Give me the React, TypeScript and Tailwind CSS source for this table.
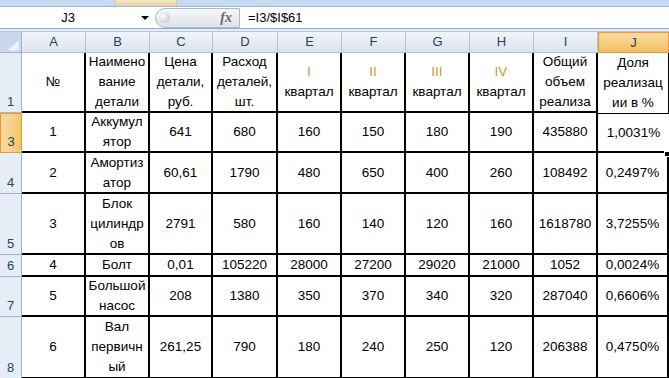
import React from "react";

type Cell = string[];

const cols = ["A", "B", "C", "D", "E", "F", "G", "H", "I", "J"];

const rows: { n: string; cells: Cell[] }[] = [
  {
    n: "1",
    cells: [
      ["№"],
      ["Наимено", "вание", "детали"],
      ["Цена", "детали,", "руб."],
      ["Расход", "деталей,", "шт."],
      ["I", "квартал"],
      ["II", "квартал"],
      ["III", "квартал"],
      ["IV", "квартал"],
      ["Общий", "объем", "реализа"],
      ["Доля", "реализац", "ии в %"],
    ],
  },
  {
    n: "3",
    cells: [["1"], ["Аккумул", "ятор"], ["641"], ["680"], ["160"], ["150"], ["180"], ["190"], ["435880"], ["1,0031%"]],
  },
  {
    n: "4",
    cells: [["2"], ["Амортиз", "атор"], ["60,61"], ["1790"], ["480"], ["650"], ["400"], ["260"], ["108492"], ["0,2497%"]],
  },
  {
    n: "5",
    cells: [["3"], ["Блок", "цилиндр", "ов"], ["2791"], ["580"], ["160"], ["140"], ["120"], ["160"], ["1618780"], ["3,7255%"]],
  },
  {
    n: "6",
    cells: [["4"], ["Болт"], ["0,01"], ["105220"], ["28000"], ["27200"], ["29020"], ["21000"], ["1052"], ["0,0024%"]],
  },
  {
    n: "7",
    cells: [["5"], ["Большой", "насос"], ["208"], ["1380"], ["350"], ["370"], ["340"], ["320"], ["287040"], ["0,6606%"]],
  },
  {
    n: "8",
    cells: [["6"], ["Вал", "первичн", "ый"], ["261,25"], ["790"], ["180"], ["240"], ["250"], ["120"], ["206388"], ["0,4750%"]],
  },
];

function cellBorder(row: number, col: number) {
  if (col === 9 && row === 0) return "border-r border-black";
  if (col === 9 && row === 1) return "border-t border-b-2 border-black";
  return "border-r-2 border-b-2 border-black";
}

export default function App() {
  return (
    <div className="relative h-[378px] w-[669px] overflow-hidden bg-white font-['Liberation_Sans',Arial,sans-serif]">
      {/* ribbon remains */}
      <div className="flex h-[7px] border-b border-[#9fb4cf] bg-[#c6daf2]">
        <div className="w-[115px]" />
        <div className="w-[62px] border-x border-[#d8c79c] bg-linear-to-b from-[#f4e8c8] to-[#e8d4a4]" />
      </div>

      {/* formula bar */}
      <div className="flex h-[22px] items-center border-b border-[#97abc4] bg-white">
        <div className="relative flex h-full w-[150px] items-center">
          <span className="w-[136px] text-center text-[13px] text-black">J3</span>
          <span className="absolute left-[141px] top-[9px] h-0 w-0 border-x-[4px] border-t-[4px] border-x-transparent border-t-black" />
        </div>
        <div className="ml-[5px] flex h-[20px] w-[85px] items-center justify-between rounded-l-full border border-[#aab9cb] bg-linear-to-b from-[#f6f8fb] to-[#dde3ea] pl-[3px] pr-[7px]">
          <span className="h-[11px] w-[11px] rounded-full bg-radial-[at_35%_35%] from-white to-[#b9bfc8]" />
          <span className="font-['Liberation_Serif',serif] text-[14px] font-bold italic leading-none text-[#6a6a6a]">
            fx
          </span>
        </div>
        <span className="pl-[8px] text-[13px] text-black">=I3/$I$61</span>
      </div>

      <div className="h-[3px] border-b border-[#b4c5d9] bg-[#e6edf5]" />

      {/* sheet */}
      <div className="grid grid-cols-[22px_64px_64px_63px_65px_64px_64px_64px_64px_64px_71px] grid-rows-[21px_60px_40px_41px_61px_22px_40px_62px]">
        <div className="relative border-r border-b border-[#9eb6ce] bg-[#c9d8ec]">
          <svg className="absolute left-[6px] top-[7px]" width="13" height="12" viewBox="0 0 13 12">
            <path d="M13 0 L13 12 L0 12 Z" fill="#eef3fa" stroke="#b0c3da" strokeWidth="0.6" />
          </svg>
        </div>
        {cols.map((c) =>
          c === "J" ? (
            <div
              key={c}
              className="flex items-center justify-center border border-[#f29536] bg-linear-to-b from-[#f9dba2] to-[#f1c05f] text-[13px] text-[#27415f]"
            >
              {c}
            </div>
          ) : (
            <div
              key={c}
              className="flex items-center justify-center border-r border-b border-[#b3c6dc] bg-linear-to-b from-[#f1f5fa] to-[#dbe3ee] text-[13px] text-[#27415f]"
            >
              {c}
            </div>
          )
        )}

        {rows.map((r, ri) => (
          <React.Fragment key={r.n}>
            <div
              className={
                r.n === "3"
                  ? "flex items-end justify-center border border-[#f29536] bg-linear-to-r from-[#f9dba2] to-[#f3c76c] pb-[2px] text-[13px] leading-[16px] text-[#27415f]"
                  : "flex items-end justify-center border-r border-b border-[#9eb6ce] bg-[#e6edf7] pb-[2px] text-[13px] leading-[16px] text-[#27415f]"
              }
            >
              {r.n}
            </div>
            {r.cells.map((lines, ci) => (
              <div
                key={ci}
                className={`flex flex-col items-center justify-center text-center text-[13.5px] leading-[20px] text-black ${cellBorder(ri, ci)}`}
              >
                {lines.map((t, li) => (
                  <span
                    key={li}
                    className={ri === 0 && ci >= 4 && ci <= 7 && li === 0 ? "whitespace-nowrap text-[#cc9a2c]" : "whitespace-nowrap"}
                  >
                    {t}
                  </span>
                ))}
              </div>
            ))}
          </React.Fragment>
        ))}
      </div>

      {/* fill handle of the selected cell */}
      <div className="absolute left-[664px] top-[151px] h-[6px] w-[6px] border border-white bg-black" />
    </div>
  );
}
